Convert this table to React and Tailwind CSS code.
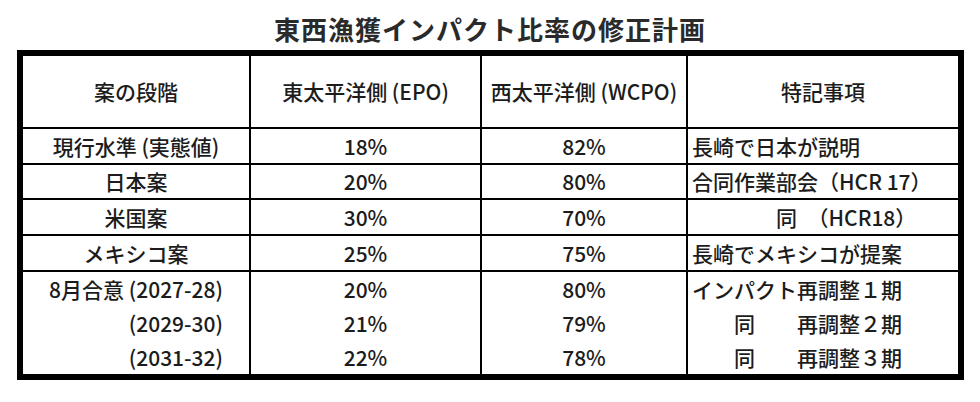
import React from 'react';

const rows = [
    { h: 'h-[36px]', stage: '現行水準 (実態値)', epo: '18%', wcpo: '82%', note: '長崎で日本が説明' },
    { h: 'h-[35px]', stage: '日本案', epo: '20%', wcpo: '80%', note: '合同作業部会（HCR 17）' },
    { h: 'h-[36px]', stage: '米国案', epo: '30%', wcpo: '70%', note: '　　　　同　（HCR18）' },
    { h: 'h-[36px]', stage: 'メキシコ案', epo: '25%', wcpo: '75%', note: '長崎でメキシコが提案' },
];

const plan = [
    { stage: '8月合意 (2027-28)', epo: '20%', wcpo: '80%', note: 'インパクト再調整１期' },
    { stage: '(2029-30)', epo: '21%', wcpo: '79%', note: '　　同　　再調整２期' },
    { stage: '(2031-32)', epo: '22%', wcpo: '78%', note: '　　同　　再調整３期' },
];

const App = () => {
    return (
        <div className="w-[980px] h-[402px] bg-white text-[#1c1c1c] font-['Noto_Sans_CJK_JP','Noto_Sans',sans-serif]">
            {/* Title */}
            <div className="pt-[16px] mb-[8px] text-center text-[26px] leading-[26px] font-bold tracking-[1px] text-[#2a2a2a]">
                東西漁獲インパクト比率の修正計画
            </div>

            <div className="ml-[17px] w-[947px] border-[6px] border-black text-[21px] leading-none font-medium">
                {/* Header */}
                <div className="flex h-[73px] border-b-2 border-black">
                    <div className="w-[228px] border-r-2 border-black flex items-center justify-center">案の段階</div>
                    <div className="w-[231px] border-r-2 border-black flex items-center justify-center">東太平洋側 (EPO)</div>
                    <div className="w-[206px] border-r-2 border-black flex items-center justify-center">西太平洋側 (WCPO)</div>
                    <div className="w-[270px] flex items-center justify-center">特記事項</div>
                </div>

                {rows.map((r) => (
                    <div key={r.stage} className={`flex border-b-2 border-black ${r.h}`}>
                        <div className="w-[228px] border-r-2 border-black flex items-center justify-center">{r.stage}</div>
                        <div className="w-[231px] border-r-2 border-black flex items-center justify-center">{r.epo}</div>
                        <div className="w-[206px] border-r-2 border-black flex items-center justify-center">{r.wcpo}</div>
                        <div className="w-[270px] flex items-center pl-[4px] whitespace-pre">{r.note}</div>
                    </div>
                ))}

                {/* Agreed plan, one block without inner lines */}
                {plan.map((r) => (
                    <div key={r.stage} className="flex h-[34px]">
                        <div className="w-[228px] border-r-2 border-black flex items-center justify-end pr-[26px]">{r.stage}</div>
                        <div className="w-[231px] border-r-2 border-black flex items-center justify-center">{r.epo}</div>
                        <div className="w-[206px] border-r-2 border-black flex items-center justify-center">{r.wcpo}</div>
                        <div className="w-[270px] flex items-center pl-[4px] whitespace-pre">{r.note}</div>
                    </div>
                ))}
            </div>
        </div>
    );
};

export default App;
